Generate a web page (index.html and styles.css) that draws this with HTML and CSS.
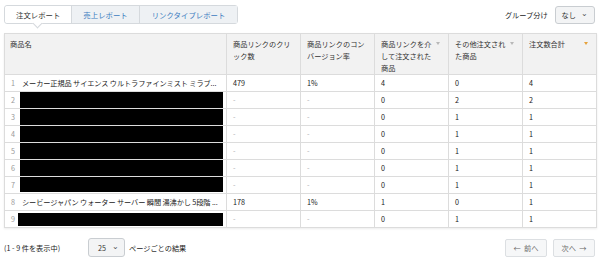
FILE: index.html
```html
<!DOCTYPE html>
<html lang="ja">
<head>
    <meta charset="UTF-8">
    <title>注文レポート</title>
    <link rel="stylesheet" href="styles.css">
</head>
<body>

    <!-- Top bar: tabs + grouping -->
    <div class="topbar">
        <div class="tabs">
            <a class="tab active" href="#">注文レポート</a>
            <a class="tab" href="#">売上レポート</a>
            <a class="tab" href="#">リンクタイプレポート</a>
        </div>
        <div class="grouping">
            <span>グループ分け</span>
            <div class="select">なし <span class="chev">&#8964;</span></div>
        </div>
    </div>

    <!-- Report table -->
    <table class="report">
        <colgroup>
            <col class="c-name">
            <col class="c-num">
            <col class="c-num">
            <col class="c-num">
            <col class="c-num">
            <col class="c-num">
        </colgroup>
        <thead>
            <tr>
                <th>商品名</th>
                <th>商品リンクのクリック数</th>
                <th>商品リンクのコンバージョン率</th>
                <th class="sortable"><span>商品リンクを介して注文された商品</span><i class="arrow"></i></th>
                <th class="sortable"><span>その他注文された商品</span><i class="arrow"></i></th>
                <th class="sortable"><span>注文数合計</span><i class="arrow on"></i></th>
            </tr>
        </thead>
        <tbody>
            <tr><td><span class="idx">1</span>メーカー正規品 サイエンス ウルトラファインミスト ミラブ...</td><td>479</td><td>1%</td><td>4</td><td>0</td><td>4</td></tr>
            <tr><td><span class="idx">2</span><div class="redact r-top"></div></td><td class="dim">-</td><td class="dim">-</td><td>0</td><td>2</td><td>2</td></tr>
            <tr><td><span class="idx">3</span><div class="redact"></div></td><td class="dim">-</td><td class="dim">-</td><td>0</td><td>1</td><td>1</td></tr>
            <tr><td><span class="idx">4</span><div class="redact"></div></td><td class="dim">-</td><td class="dim">-</td><td>0</td><td>1</td><td>1</td></tr>
            <tr><td><span class="idx">5</span><div class="redact"></div></td><td class="dim">-</td><td class="dim">-</td><td>0</td><td>1</td><td>1</td></tr>
            <tr><td><span class="idx">6</span><div class="redact"></div></td><td class="dim">-</td><td class="dim">-</td><td>0</td><td>1</td><td>1</td></tr>
            <tr><td><span class="idx">7</span><div class="redact r-bottom"></div></td><td class="dim">-</td><td class="dim">-</td><td>0</td><td>1</td><td>1</td></tr>
            <tr><td><span class="idx">8</span>シービージャパン ウォーター サーバー 瞬間 湯沸かし 5段階 ...</td><td>178</td><td>1%</td><td>1</td><td>0</td><td>1</td></tr>
            <tr><td><span class="idx">9</span><div class="redact r-single"></div></td><td class="dim">-</td><td class="dim">-</td><td>0</td><td>1</td><td>1</td></tr>
        </tbody>
    </table>

    <!-- Footer -->
    <div class="footer">
        <span class="count">(1 - 9 件を表示中)</span>
        <div class="select perpage">25 <span class="chev">&#8964;</span></div>
        <span class="perpage-label">ページごとの結果</span>
        <div class="pager">
            <button>&larr;&nbsp; 前へ</button>
            <button>次へ &nbsp;&rarr;</button>
        </div>
    </div>

</body>
</html>
```
FILE: styles.css
```css
body {
    margin: 0;
    padding: 5px 5px 0 4px;
    font-family: "Noto Sans CJK JP", "Noto Sans", sans-serif;
    font-size: 7.2px;
    color: #222;
    background: #fff;
}

/* Top bar */
.topbar {
    display: flex;
    justify-content: space-between;
    align-items: flex-start;
    height: 28px;
}

.tabs {
    display: flex;
    border: 1px solid #d5d9dd;
    border-radius: 3px;
    height: 17px;
}

.tab {
    position: relative;
    display: flex;
    align-items: center;
    padding: 0 11px;
    text-decoration: none;
    color: #3d7cc0;
    background: #eef1f4;
    border-left: 1px solid #d5d9dd;
    font-size: 7.4px;
}

.tab:last-child {
    padding: 0 12px;
}

.tab:first-child {
    border-left: none;
    border-radius: 3px 0 0 3px;
}

.tab.active {
    background: #fff;
    color: #333;
}

.tab.active::after {
    content: "";
    position: absolute;
    left: 29px;
    bottom: -4px;
    width: 6px;
    height: 6px;
    background: #fff;
    border-right: 1px solid #d5d9dd;
    border-bottom: 1px solid #d5d9dd;
    transform: rotate(45deg);
}

.grouping {
    display: flex;
    align-items: center;
    gap: 7px;
    margin-top: 1px;
}

.select {
    display: flex;
    align-items: center;
    gap: 5px;
    height: 16px;
    padding: 0 6px;
    border: 1px solid #c9cdd1;
    border-radius: 3px;
    background: #f3f4f5;
    color: #333;
}

.chev {
    font-size: 8px;
    line-height: 1;
    margin-top: -4px;
    color: #555;
}

/* Report table */
.report {
    width: 591px;
    table-layout: fixed;
    border-collapse: collapse;
    border: 1px solid #dcdcdc;
    box-shadow: 0 1px 2px rgba(0, 0, 0, 0.08);
}

.c-name {
    width: 222px;
}

.c-num {
    width: 74px;
}

.report th {
    height: 41px;
    padding: 4px 9px 0 6px;
    background: #f2f2f2;
    border-left: 1px solid #dcdcdc;
    border-bottom: 1px solid #dcdcdc;
    font-weight: normal;
    text-align: left;
    vertical-align: top;
    line-height: 12px;
    color: #333;
    box-sizing: border-box;
}

.report th:first-child {
    padding-left: 5px;
}

.report th.sortable {
    position: relative;
    padding-right: 16px;
}

.arrow {
    position: absolute;
    right: 8px;
    top: 8px;
    width: 0;
    height: 0;
    border-left: 2.5px solid transparent;
    border-right: 2.5px solid transparent;
    border-top: 3px solid #b8b8b8;
}

.arrow.on {
    border-top-color: #e6a23c;
}

.report td {
    height: 17px;
    padding: 0 6px;
    border-left: 1px solid #dcdcdc;
    border-bottom: 1px solid #dcdcdc;
    box-sizing: border-box;
    white-space: nowrap;
    overflow: hidden;
    line-height: 16px;
    color: #222;
}

.report td:first-child {
    position: relative;
    padding-left: 6px;
    letter-spacing: -0.1px;
}

.report td.dim {
    color: #aaa;
}

.idx {
    display: inline-block;
    width: 11px;
    color: #999;
}

/* blacked-out product names */
.redact {
    position: absolute;
    left: 15px;
    right: 3px;
    top: -1px;
    bottom: -1px;
    background: #000;
}

.redact.r-top {
    top: -2px;
}

.redact.r-bottom {
    bottom: 1px;
}

.redact.r-single {
    left: 13px;
    top: 2px;
    bottom: 1px;
}

/* Footer */
.footer {
    display: flex;
    align-items: center;
    margin-top: 10px;
}

.count {
    width: 84px;
}

.perpage {
    gap: 6px;
    height: 17px;
    padding: 0 5px 0 9px;
}

.perpage-label {
    margin-left: 4px;
}

.pager {
    display: flex;
    gap: 6px;
    margin-left: auto;
}

.pager button {
    height: 18px;
    width: 42px;
    padding: 0;
    border: 1px solid #dcdfe2;
    border-radius: 2px;
    background: #f6f7f8;
    color: #666;
    font-family: inherit;
    font-size: 7.2px;
}
```
